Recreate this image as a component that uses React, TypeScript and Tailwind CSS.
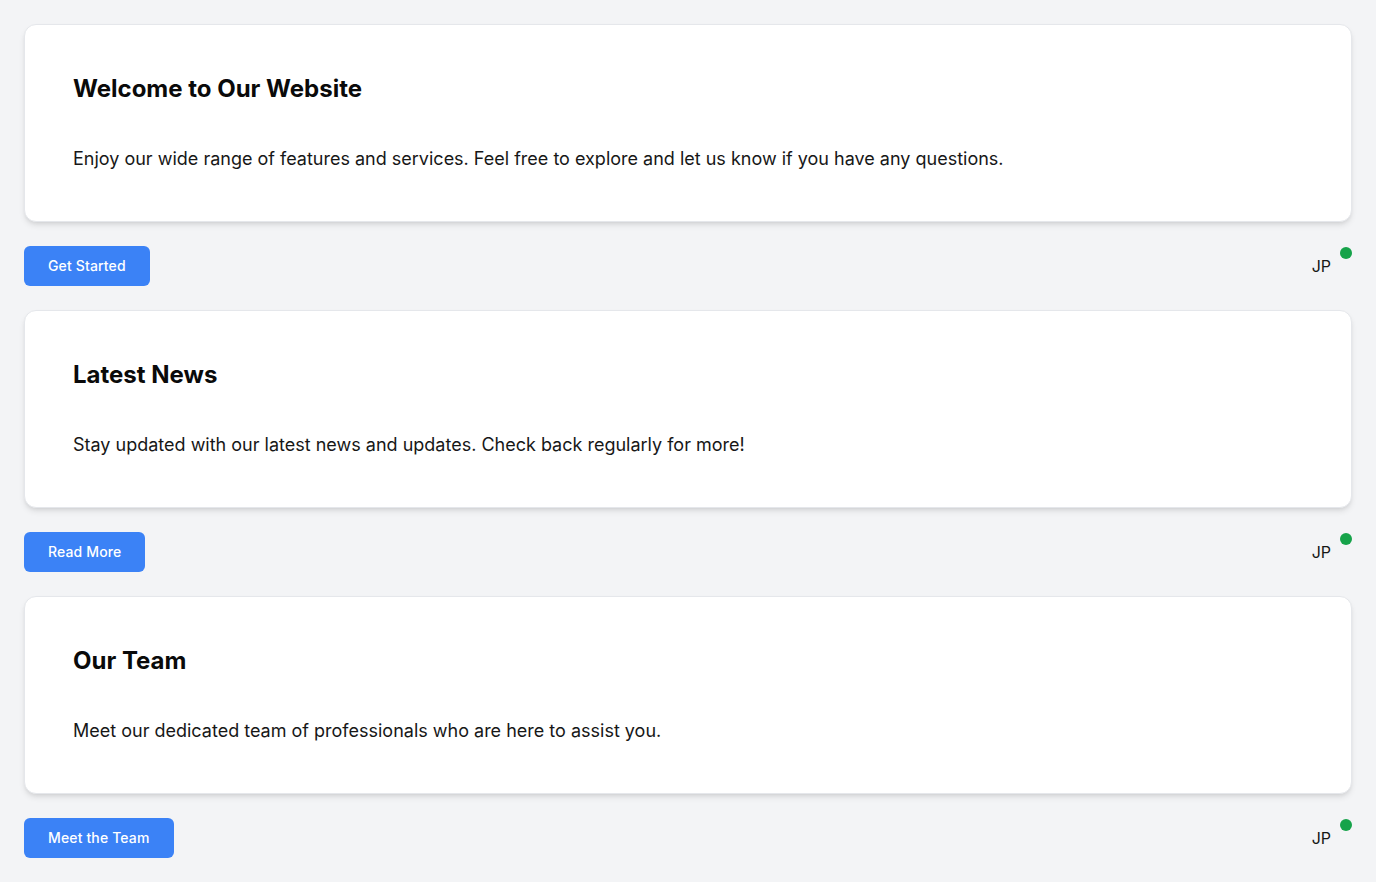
import React from 'react';

interface Section {
  title: string;
  body: string;
  action: string;
}

const sections: Section[] = [
  {
    title: 'Welcome to Our Website',
    body: 'Enjoy our wide range of features and services. Feel free to explore and let us know if you have any questions.',
    action: 'Get Started',
  },
  {
    title: 'Latest News',
    body: 'Stay updated with our latest news and updates. Check back regularly for more!',
    action: 'Read More',
  },
  {
    title: 'Our Team',
    body: 'Meet our dedicated team of professionals who are here to assist you.',
    action: 'Meet the Team',
  },
];

const App: React.FC = () => {
  return (
    <div className="min-h-screen bg-[#f3f4f6] p-6 font-['Inter',sans-serif]">
      <div className="flex flex-col gap-6">
        {sections.map((s) => (
          <div key={s.title} className="flex flex-col gap-6">
            {/* Card */}
            <div className="bg-white border border-[#e5e7eb] rounded-xl shadow-md p-12">
              <h2 className="text-2xl font-bold text-[#0a0a0a]">{s.title}</h2>
              <p className="mt-10 text-lg text-[#171717]">{s.body}</p>
            </div>

            {/* Footer row */}
            <div className="flex items-center justify-between h-10">
              <button className="h-10 px-6 bg-[#3b82f6] hover:bg-[#2563eb] text-white text-sm font-medium tracking-[0.01em] rounded-md">
                {s.action}
              </button>
              <div className="relative h-10 flex items-center pr-[21px]">
                <span className="text-base text-[#171717]">JP</span>
                <span className="absolute top-px right-0 w-3 h-3 rounded-full bg-[#16a34a]" />
              </div>
            </div>
          </div>
        ))}
      </div>
    </div>
  );
};

export default App;
